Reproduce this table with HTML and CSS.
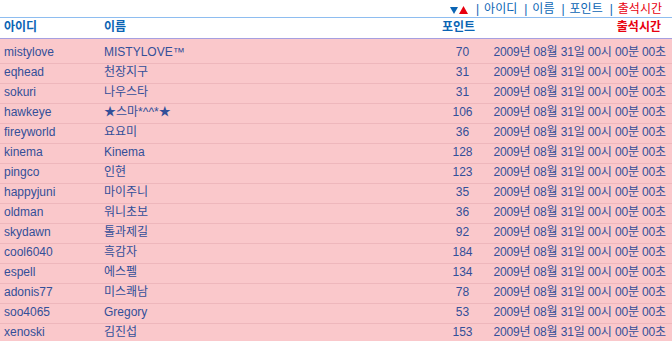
FILE: index.html
```html
<!DOCTYPE html>
<html lang="ko">
<head>
<meta charset="utf-8">
<title>출석부</title>
<link rel="stylesheet" href="styles.css">
</head>
<body>
<div class="sortbar">
  <span class="arrows">
    <svg class="tri" width="8" height="8" viewBox="0 0 8 8"><polygon points="0,1 8,1 4,8" fill="#0a64b4"/></svg><svg class="tri" width="9" height="8" viewBox="0 0 9 8"><polygon points="0,8 9,8 4.5,0" fill="#e8000f"/></svg>
  </span>
  <span class="sep">|</span><a class="slink">아이디</a>
  <span class="sep">|</span><a class="slink">이름</a>
  <span class="sep">|</span><a class="slink">포인트</a>
  <span class="sep">|</span><a class="slink active">출석시간</a>
</div>
<div class="list">
  <div class="head">
    <div class="c-id">아이디</div>
    <div class="c-name">이름</div>
    <div class="c-pt">포인트</div>
    <div class="c-date active">출석시간</div>
  </div>
  <div class="body">
    <div class="row"><div class="c-id">mistylove</div><div class="c-name">MISTYLOVE™</div><div class="c-pt">70</div><div class="c-date">2009년 08월 31일 00시 00분 00초</div></div>
    <div class="row"><div class="c-id">eqhead</div><div class="c-name">천장지구</div><div class="c-pt">31</div><div class="c-date">2009년 08월 31일 00시 00분 00초</div></div>
    <div class="row"><div class="c-id">sokuri</div><div class="c-name">나우스타</div><div class="c-pt">31</div><div class="c-date">2009년 08월 31일 00시 00분 00초</div></div>
    <div class="row"><div class="c-id">hawkeye</div><div class="c-name">★스마*^^*★</div><div class="c-pt">106</div><div class="c-date">2009년 08월 31일 00시 00분 00초</div></div>
    <div class="row"><div class="c-id">fireyworld</div><div class="c-name">요요미</div><div class="c-pt">36</div><div class="c-date">2009년 08월 31일 00시 00분 00초</div></div>
    <div class="row"><div class="c-id">kinema</div><div class="c-name">Kinema</div><div class="c-pt">128</div><div class="c-date">2009년 08월 31일 00시 00분 00초</div></div>
    <div class="row"><div class="c-id">pingco</div><div class="c-name">인현</div><div class="c-pt">123</div><div class="c-date">2009년 08월 31일 00시 00분 00초</div></div>
    <div class="row"><div class="c-id">happyjuni</div><div class="c-name">마이주니</div><div class="c-pt">35</div><div class="c-date">2009년 08월 31일 00시 00분 00초</div></div>
    <div class="row"><div class="c-id">oldman</div><div class="c-name">워니초보</div><div class="c-pt">36</div><div class="c-date">2009년 08월 31일 00시 00분 00초</div></div>
    <div class="row"><div class="c-id">skydawn</div><div class="c-name">톨과제길</div><div class="c-pt">92</div><div class="c-date">2009년 08월 31일 00시 00분 00초</div></div>
    <div class="row"><div class="c-id">cool6040</div><div class="c-name">흑감자</div><div class="c-pt">184</div><div class="c-date">2009년 08월 31일 00시 00분 00초</div></div>
    <div class="row"><div class="c-id">espell</div><div class="c-name">에스펠</div><div class="c-pt">134</div><div class="c-date">2009년 08월 31일 00시 00분 00초</div></div>
    <div class="row"><div class="c-id">adonis77</div><div class="c-name">미스쾌남</div><div class="c-pt">78</div><div class="c-date">2009년 08월 31일 00시 00분 00초</div></div>
    <div class="row"><div class="c-id">soo4065</div><div class="c-name">Gregory</div><div class="c-pt">53</div><div class="c-date">2009년 08월 31일 00시 00분 00초</div></div>
    <div class="row"><div class="c-id">xenoski</div><div class="c-name">김진섭</div><div class="c-pt">153</div><div class="c-date">2009년 08월 31일 00시 00분 00초</div></div>
  </div>
</div>
</body>
</html>
```

FILE: styles.css
```css
html, body {
  margin: 0;
  padding: 0;
  background: #ffffff;
}
body {
  font-family: "Liberation Sans", "Noto Sans CJK KR", sans-serif;
  font-size: 12px;
  color: #334f99;
  overflow: hidden;
}
.sortbar {
  height: 17px;
  line-height: 19px;
  display: flex;
  justify-content: flex-end;
  align-items: flex-start;
  padding-right: 10px;
  color: #0a64b4;
  white-space: nowrap;
}
.arrows {
  display: inline-flex;
  align-items: center;
  height: 17px;
  padding-top: 2px;
  box-sizing: border-box;
}
.tri {
  display: block;
  margin-right: 1px;
}
.sep {
  margin: 0 5px 0 7px;
}
.slink {
  color: #0a64b4;
}
.slink.active {
  color: #e8000f;
}
.list {
  width: 672px;
}
.head,
.row {
  display: grid;
  grid-template-columns: 100px 340px 45px 1fr;
  white-space: nowrap;
}
.head {
  border-top: 1px solid #8ebdf0;
  border-bottom: 1px solid #a69fe0;
  height: 20px;
  line-height: 19px;
  font-weight: bold;
  color: #0a64b4;
}
.head .c-pt {
  text-align: right;
  padding-right: 10px;
  direction: rtl;
}
.head .c-date {
  text-align: right;
  padding-right: 11px;
}
.head .active {
  color: #e8000f;
}
.body {
  background: #fac8cb;
  padding-top: 5px;
}
.row {
  height: 19px;
  line-height: 16px;
  border-bottom: 1px solid #eeb7bc;
}
.c-id,
.c-name {
  padding-left: 4px;
}
.row .c-pt {
  text-align: center;
}
.row .c-date {
  text-align: right;
  padding-right: 6px;
  letter-spacing: -0.15px;
}
```
